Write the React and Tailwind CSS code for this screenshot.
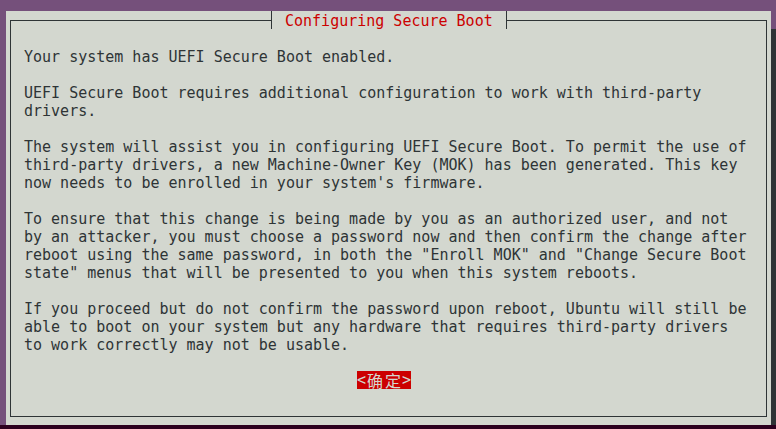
const lines = [
  'Your system has UEFI Secure Boot enabled.',
  '',
  'UEFI Secure Boot requires additional configuration to work with third-party',
  'drivers.',
  '',
  'The system will assist you in configuring UEFI Secure Boot. To permit the use of',
  'third-party drivers, a new Machine-Owner Key (MOK) has been generated. This key',
  "now needs to be enrolled in your system's firmware.",
  '',
  'To ensure that this change is being made by you as an authorized user, and not',
  'by an attacker, you must choose a password now and then confirm the change after',
  'reboot using the same password, in both the "Enroll MOK" and "Change Secure Boot',
  'state" menus that will be presented to you when this system reboots.',
  '',
  'If you proceed but do not confirm the password upon reboot, Ubuntu will still be',
  'able to boot on your system but any hardware that requires third-party drivers',
  'to work correctly may not be usable.',
];

const mono = "font-['DejaVu_Sans_Mono','Liberation_Mono',monospace]";

export default function App() {
  return (
    <div className={`w-[776px] h-[429px] bg-[#75507b] flex flex-col overflow-hidden text-[15px] leading-[18px] ${mono}`}>
      <div className="h-[11px] shrink-0" />
      <div className="flex h-[414px] shrink-0">
        <div className="w-[6px] shrink-0" />
        <div className="w-[765px] shrink-0 bg-[#d3d7cf] flex flex-col pt-[9px] px-[4px] pb-[8px]">
          <div className="relative flex-1 border border-[#2e3436] pl-[13px] pt-[27px] text-[#2e3436]">
            {/* title over the top border */}
            <div className="absolute left-[260px] top-[-10px] flex items-stretch h-[18px]">
              <div className="w-px bg-[#2e3436]" />
              <div className="bg-[#d3d7cf] px-[13px] pt-px text-[#cc0000] whitespace-pre">Configuring Secure Boot</div>
              <div className="w-px bg-[#2e3436]" />
            </div>

            {lines.map((line, i) => (
              <div key={i} className="h-[18px] whitespace-pre">{line}</div>
            ))}

            <div className="mt-[17px] ml-[333px] flex w-[54px] h-[18px] bg-[#cc0000] text-[#d3d7cf]">
              <span className="w-[9px] text-center">&lt;</span>
              <span className="w-[18px] text-center text-[16px] font-['Noto_Sans_CJK_SC',sans-serif]">确</span>
              <span className="w-[18px] text-center text-[16px] font-['Noto_Sans_CJK_SC',sans-serif]">定</span>
              <span className="w-[9px] text-center">&gt;</span>
            </div>
          </div>
        </div>
        <div className="w-[5px] shrink-0 flex flex-col">
          <div className="h-[18px]" />
          <div className="flex-1 bg-[#2e3436]" />
        </div>
      </div>
      <div className="flex-1 bg-[#2c001e]" />
    </div>
  );
}
